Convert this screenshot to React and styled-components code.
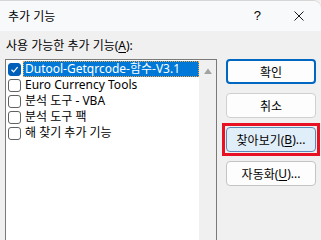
import React from 'react'
import styled, { createGlobalStyle } from 'styled-components'

const GlobalStyle = createGlobalStyle`
  html, body {
    margin: 0;
    padding: 0;
    background: #f0f0f0;
  }
  * {
    box-sizing: border-box;
  }
`

const items = [
  { label: 'Dutool-Getqrcode-함수-V3.1', checked: true, selected: true },
  { label: 'Euro Currency Tools' },
  { label: '분석 도구 - VBA' },
  { label: '분석 도구 팩' },
  { label: '해 찾기 추가 기능' },
]

const buttons = [
  { label: '확인', kind: 'primary' },
  { label: '취소', kind: 'plain' },
  { label: '찾아보기', key: 'B', kind: 'focus', marked: true },
  { label: '자동화', key: 'U', kind: 'normal' },
]

function Check({ checked }) {
  return (
    <Box checked={checked}>
      {checked && (
        <svg width="9" height="9" viewBox="0 0 9 9">
          <path d="M1.5 4.8 L3.6 6.8 L7.6 2.2" fill="none" stroke="#fff" strokeWidth="1.2" />
        </svg>
      )}
    </Box>
  )
}

function App() {
  return (
    <Window>
      <GlobalStyle />
      <TitleBar>
        <Title>추가 기능</Title>
        <TitleActions>
          <Help>?</Help>
          <CloseIcon width="10" height="10" viewBox="0 0 10 10">
            <path d="M0.5 0.5 L9.5 9.5 M9.5 0.5 L0.5 9.5" stroke="#1a1a1a" strokeWidth="1" />
          </CloseIcon>
        </TitleActions>
      </TitleBar>
      <Body>
        <Label>
          사용 가능한 추가 기능(<u>A</u>):
        </Label>
        <Content>
          <ListBox>
            <Rows>
              {items.map((it) => (
                <Row key={it.label}>
                  <Check checked={it.checked} />
                  <ItemText selected={it.selected}>{it.label}</ItemText>
                </Row>
              ))}
            </Rows>
            <ScrollBar>
              <svg width="8" height="6" viewBox="0 0 8 6">
                <path d="M0 6 L4 0.5 L8 6 Z" fill="#a3a3a3" />
              </svg>
            </ScrollBar>
          </ListBox>
          <Buttons>
            {buttons.map((b) => (
              <Marker key={b.label} marked={b.marked}>
                <Button kind={b.kind}>
                  {b.label}
                  {b.key && (
                    <>
                      (<u>{b.key}</u>)...
                    </>
                  )}
                </Button>
              </Marker>
            ))}
          </Buttons>
        </Content>
      </Body>
    </Window>
  )
}

const Window = styled.div`
  width: 321px;
  height: 240px;
  overflow: hidden;
  background: #f0f0f0;
  font-family: 'Noto Sans', 'Noto Sans CJK KR', sans-serif;
  font-size: 12px;
  color: #000;
  border-top: 1px solid #d6d6d6;
  border-top-right-radius: 8px;
`
const TitleBar = styled.div`
  height: 30px;
  display: flex;
  align-items: center;
  justify-content: space-between;
  background: #f8f9fb;
  padding: 0 17px 0 8px;
`
const Title = styled.div`
  font-size: 12px;
  margin-top: -1px;
`
const TitleActions = styled.div`
  display: flex;
  align-items: center;
  gap: 33px;
`
const Help = styled.span`
  font-family: 'Liberation Sans', sans-serif;
  font-size: 13px;
  margin-top: -2px;
`
const CloseIcon = styled.svg`
  display: block;
`
const Body = styled.div`
  padding: 7px 0 0 5px;
  display: flex;
  flex-direction: column;
`
const Label = styled.div`
  padding-left: 1px;
  height: 21px;
  line-height: 16px;
  u {
    text-underline-offset: 2px;
  }
`
const Content = styled.div`
  display: flex;
  align-items: flex-start;
  gap: 9px;
`
const ListBox = styled.div`
  width: 212px;
  height: 200px;
  border: 1px solid #7a7a7a;
  background: #fff;
  display: flex;
`
const Rows = styled.div`
  flex: 1;
  padding: 1px 0 0 2px;
  display: flex;
  flex-direction: column;
`
const Row = styled.div`
  height: 16px;
  display: flex;
  align-items: center;
  gap: 2px;
`
const Box = styled.span`
  width: 13px;
  height: 13px;
  flex: none;
  border-radius: 3px;
  display: flex;
  align-items: center;
  justify-content: center;
  border: 1px solid ${({ checked }) => (checked ? '#005fb8' : '#616161')};
  background: ${({ checked }) => (checked ? '#005fb8' : '#fff')};
`
const ItemText = styled.span`
  flex: 1;
  height: 16px;
  line-height: 15px;
  padding-left: 2px;
  white-space: nowrap;
  color: ${({ selected }) => (selected ? '#fff' : '#000')};
  background: ${({ selected }) => (selected ? '#0078d7' : 'transparent')};
  outline: ${({ selected }) => (selected ? '1px dotted #f5a142' : 'none')};
  outline-offset: -1px;
`
const ScrollBar = styled.div`
  width: 17px;
  background: #f0f0f0;
  display: flex;
  justify-content: center;
  padding-top: 8px;
  svg {
    display: block;
  }
`
const Buttons = styled.div`
  display: flex;
  flex-direction: column;
  gap: 9px;
`
const Marker = styled.div`
  margin: -4px;
  padding: 1px;
  border: 3px solid ${({ marked }) => (marked ? '#e81123' : 'transparent')};
`
const Button = styled.div`
  width: 90px;
  height: 25px;
  display: flex;
  align-items: center;
  justify-content: center;
  border-radius: 4px;
  white-space: nowrap;
  background: ${({ kind }) => (kind === 'focus' ? '#e0eef9' : '#fdfdfd')};
  border: ${({ kind }) =>
    kind === 'primary'
      ? '2px solid #0067c0'
      : kind === 'focus'
      ? '1px solid #5a8ab8'
      : kind === 'plain'
      ? '1px solid #d0d0d0'
      : '1px solid #c4c4c4'};
  u {
    text-underline-offset: 2px;
  }
`

export default App
